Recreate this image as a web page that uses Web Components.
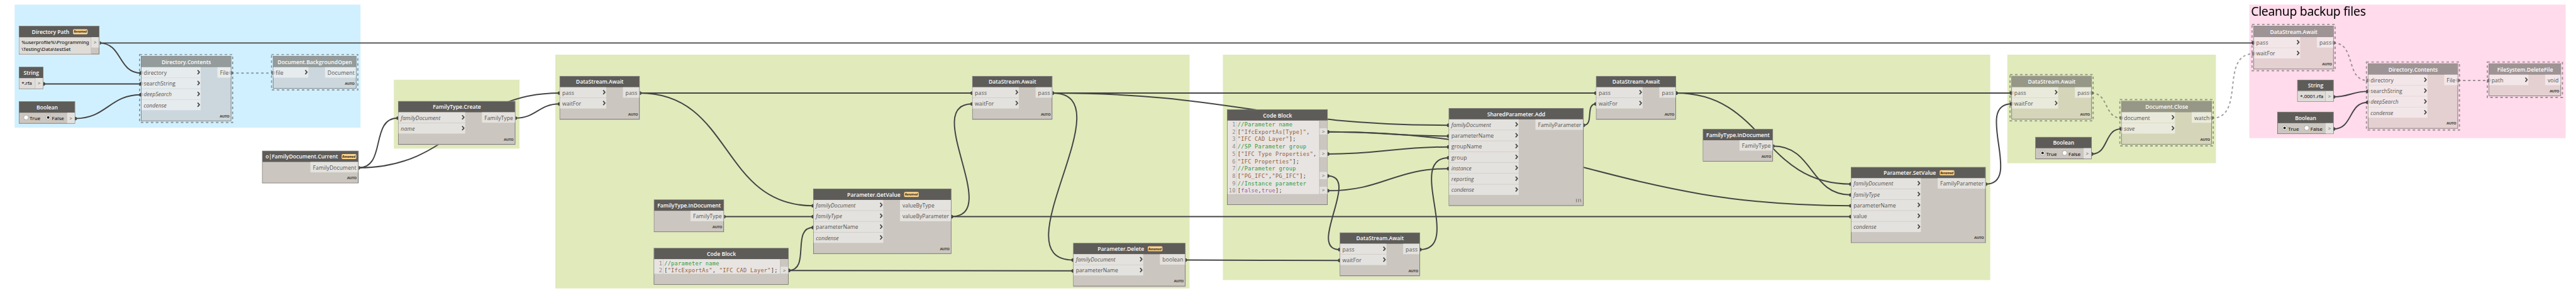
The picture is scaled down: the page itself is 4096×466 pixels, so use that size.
<!DOCTYPE html>
<html lang="en">
<head>
<meta charset="utf-8">
<title>Dynamo graph</title>
<style>
html, body { margin: 0; padding: 0; background: #fff; }
body { width: 4096px; height: 466px; overflow: hidden; font-family: "Open Sans", "Noto Sans", sans-serif; }
</style>
</head>
<body>
<graph-canvas>
  <graph-group x="35" y="11" w="829" h="295" color="#d1f0ff"></graph-group>
  <graph-group x="944" y="191" w="301" h="165" color="#e0eabb"></graph-group>
  <graph-group x="1331" y="131" w="1520" h="560" color="#e0eabb"></graph-group>
  <graph-group x="2931" y="131" w="1839" h="540" color="#e0eabb"></graph-group>
  <graph-group x="4811" y="131" w="500" h="260" color="#e0eabb"></graph-group>
  <graph-group x="5391" y="11" w="758" h="320" color="#ffdbeb">Cleanup backup files</graph-group>

  <graph-wires></graph-wires>

  <graph-node x="45" y="62" w="193" name="Directory Path" renamed kind="value">
    <text-value><fit-text>%userprofile%\Programming</fit-text><fit-text>\Testing\Data\testSet</fit-text></text-value>
    <value-port></value-port>
  </graph-node>
  <graph-node x="45" y="160" w="59" name="String" kind="value">
    <text-value><fit-text>*.rfa</fit-text></text-value><value-port></value-port>
  </graph-node>
  <graph-node x="45" y="243" w="135" name="Boolean" kind="value">
    <bool-value value="false"></bool-value><value-port></value-port>
  </graph-node>
  <graph-node x="338" y="134" w="216" name="Directory.Contents" frozen="blue">
    <in-port slot="in" linked>directory</in-port><in-port slot="in" linked>searchString</in-port>
    <in-port slot="in" optional linked>deepSearch</in-port><in-port slot="in" optional>condense</in-port>
    <out-port slot="out" w="32" linked>File</out-port>
  </graph-node>
  <graph-node x="654" y="134" w="200" name="Document.BackgroundOpen" frozen="blue">
    <in-port slot="in" linked>file</in-port>
    <out-port slot="out" w="74">Document</out-port>
  </graph-node>
  <graph-node x="628" y="361" w="231" name="o|FamilyDocument.Current" renamed>
    <out-port slot="out" w="114">FamilyDocument</out-port>
  </graph-node>
  <graph-node x="954" y="242" w="281" name="FamilyType.Create">
    <in-port slot="in" optional>familyDocument</in-port><in-port slot="in" optional>name</in-port>
    <out-port slot="out" w="79">FamilyType</out-port>
  </graph-node>
  <graph-node x="1341" y="182" w="192" name="DataStream.Await">
    <in-port slot="in">pass</in-port><in-port slot="in">waitFor</in-port>
    <out-port slot="out" w="39">pass</out-port>
  </graph-node>
  <graph-node x="1567" y="478" w="168" name="FamilyType.InDocument">
    <out-port slot="out" w="79">FamilyType</out-port>
  </graph-node>
  <graph-node x="1567" y="594" w="323" name="Code Block" kind="code">
    <code-block ports="2"><code-line><i>//parameter name</i></code-line><code-line>[<b>"IfcExportAs"</b>, <b>"IFC CAD Layer"</b>];</code-line></code-block>
  </graph-node>
  <graph-node x="1949" y="452" w="331" name="Parameter.GetValue" renamed>
    <in-port slot="in" optional>familyDocument</in-port><in-port slot="in" optional>familyType</in-port>
    <in-port slot="in">parameterName</in-port><in-port slot="in" optional>condense</in-port>
    <out-port slot="out" w="122">valueByType</out-port><out-port slot="out" w="122">valueByParameter</out-port>
  </graph-node>
  <graph-node x="2330" y="182" w="192" name="DataStream.Await">
    <in-port slot="in">pass</in-port><in-port slot="in">waitFor</in-port>
    <out-port slot="out" w="39">pass</out-port>
  </graph-node>
  <graph-node x="2572" y="582" w="269" name="Parameter.Delete" renamed>
    <in-port slot="in" optional>familyDocument</in-port><in-port slot="in">parameterName</in-port>
    <out-port slot="out" w="60">boolean</out-port>
  </graph-node>
  <graph-node x="2941" y="262" w="241" name="Code Block" kind="code">
    <code-block ports="2 5 8 10"><code-line><i>//Parameter name</i></code-line><code-line>[<b>"IfcExportAs[Type]"</b>,</code-line><code-line><b>"IFC CAD Layer"</b>];</code-line><code-line><i>//SP Parameter group</i></code-line><code-line>[<b>"IFC Type Properties"</b>,</code-line><code-line><b>"IFC Properties"</b>];</code-line><code-line><i>//Parameter group</i></code-line><code-line>[<b>"PG_IFC"</b>,<b>"PG_IFC"</b>];</code-line><code-line><i>//Instance parameter</i></code-line><code-line>[<u>false</u>,<u>true</u>];</code-line></code-block>
  </graph-node>
  <graph-node x="3211" y="557" w="192" name="DataStream.Await">
    <in-port slot="in">pass</in-port><in-port slot="in">waitFor</in-port>
    <out-port slot="out" w="39">pass</out-port>
  </graph-node>
  <graph-node x="3472" y="259" w="323" name="SharedParameter.Add" lacing>
    <in-port slot="in" optional>familyDocument</in-port><in-port slot="in">parameterName</in-port>
    <in-port slot="in">groupName</in-port><in-port slot="in">group</in-port>
    <in-port slot="in" optional>instance</in-port><in-port slot="in" optional>reporting</in-port><in-port slot="in" optional>condense</in-port>
    <out-port slot="out" w="114">FamilyParameter</out-port>
  </graph-node>
  <graph-node x="3825" y="182" w="192" name="DataStream.Await">
    <in-port slot="in">pass</in-port><in-port slot="in">waitFor</in-port>
    <out-port slot="out" w="39">pass</out-port>
  </graph-node>
  <graph-node x="4081" y="309" w="168" name="FamilyType.InDocument">
    <out-port slot="out" w="79">FamilyType</out-port>
  </graph-node>
  <graph-node x="4436" y="400" w="323" name="Parameter.SetValue" renamed>
    <in-port slot="in" optional>familyDocument</in-port><in-port slot="in" optional>familyType</in-port>
    <in-port slot="in">parameterName</in-port><in-port slot="in">value</in-port><in-port slot="in" optional>condense</in-port>
    <out-port slot="out" w="114">FamilyParameter</out-port>
  </graph-node>
  <graph-node x="4821" y="182" w="192" name="DataStream.Await" frozen="green">
    <in-port slot="in" linked>pass</in-port><in-port slot="in" linked>waitFor</in-port>
    <out-port slot="out" w="39" linked>pass</out-port>
  </graph-node>
  <graph-node x="4878" y="328" w="135" name="Boolean" kind="value">
    <bool-value value="true"></bool-value><value-port></value-port>
  </graph-node>
  <graph-node x="5084" y="242" w="217" name="Document.Close" frozen="green">
    <in-port slot="in" linked>document</in-port><in-port slot="in" optional linked>save</in-port>
    <out-port slot="out" w="47" linked>watch</out-port>
  </graph-node>
  <graph-node x="5401" y="62" w="192" name="DataStream.Await" frozen="pink">
    <in-port slot="in" linked>pass</in-port><in-port slot="in" linked>waitFor</in-port>
    <out-port slot="out" w="39" linked>pass</out-port>
  </graph-node>
  <graph-node x="5506" y="191" w="87" name="String" kind="value">
    <text-value><fit-text>*.0001.rfa</fit-text></text-value><value-port></value-port>
  </graph-node>
  <graph-node x="5458" y="268" w="135" name="Boolean" kind="value">
    <bool-value value="true"></bool-value><value-port></value-port>
  </graph-node>
  <graph-node x="5675" y="152" w="216" name="Directory.Contents" frozen="pink">
    <in-port slot="in" linked>directory</in-port><in-port slot="in" linked>searchString</in-port>
    <in-port slot="in" optional linked>deepSearch</in-port><in-port slot="in" optional>condense</in-port>
    <out-port slot="out" w="32" linked>File</out-port>
  </graph-node>
  <graph-node x="5965" y="152" w="173" name="FileSystem.DeleteFile" frozen="pink">
    <in-port slot="in" linked>path</in-port>
    <out-port slot="out" w="37">void</out-port>
  </graph-node>
</graph-canvas>

<script>
// Label widths in canvas units; letter spacing is adjusted so that each label fills its width.
const LABEL_WIDTHS = {
  'Directory Path': 90, 'Directory.Contents': 118.5, 'Document.BackgroundOpen': 178.5, 'String': 37, 'Boolean': 51,
  'FamilyType.Create': 115.5, 'o|FamilyDocument.Current': 173.5, 'DataStream.Await': 114, 'FamilyType.InDocument': 152,
  'Code Block': 69.5, 'Parameter.GetValue': 127.5, 'Parameter.Delete': 111.5, 'SharedParameter.Add': 139.5,
  'Parameter.SetValue': 125.5, 'Document.Close': 102.5, 'FileSystem.DeleteFile': 133.5,
  'directory': 55, 'searchString': 76, 'deepSearch': 67, 'condense': 54.5, 'File': 21, 'file': 19, 'Document': 65,
  'FamilyDocument': 104, 'familyDocument': 95, 'name': 34, 'FamilyType': 69, 'pass': 29, 'waitFor': 45.5,
  'familyType': 63, 'parameterName': 101.5, 'valueByType': 76.5, 'valueByParameter': 111.5, 'boolean': 50,
  'groupName': 73.5, 'group': 37.5, 'instance': 48.5, 'reporting': 54, 'FamilyParameter': 104, 'value': 32,
  'document': 62.5, 'save': 26, 'watch': 37, 'path': 28.5, 'void': 26.5,
  '%userprofile%\\Programming': 162, '\\Testing\\Data\\testSet': 118, '*.rfa': 25, '*.0001.rfa': 56,
  'True': 26, 'False': 29, 'AUTO': 23, 'Renamed': 31, 'Cleanup backup files': 275
};
const ruler = document.createElement('canvas').getContext('2d');

function define(name, html, setup) {
  const tpl = document.createElement('template');
  tpl.innerHTML = html.trim();
  customElements.define(name, class extends HTMLElement {
    connectedCallback() {
      if (this.shadowRoot) return;
      const root = this.attachShadow({ mode: 'open' });
      const view = tpl.content.cloneNode(true);
      if (setup) setup(this, view);
      root.append(view);
    }
  });
}
function place(host) {
  host.style.left = host.getAttribute('x') + 'px';
  host.style.top = host.getAttribute('y') + 'px';
  host.style.width = host.getAttribute('w') + 'px';
  if (host.hasAttribute('h')) host.style.height = host.getAttribute('h') + 'px';
}

define('graph-canvas', `
  <style>
    :host { display: block; position: relative; width: 4096px; height: 466px; overflow: hidden; }
    .stage { position: relative; width: 6174px; height: 702px; transform: scale(.66343, .66382); transform-origin: 0 0; }
  </style>
  <div class="stage"><slot></slot></div>`);

define('graph-group', `
  <style>
    :host { display: block; position: absolute; box-sizing: border-box; padding: 1.5px 0 0 4px;
      font: 29.3px/27px "Noto Sans", sans-serif; color: #000; }
  </style>
  <fit-text></fit-text>`, (host, root) => {
  place(host);
  host.style.background = host.getAttribute('color');
  root.querySelector('fit-text').textContent = host.textContent;
});

define('graph-node', `
  <style>
    :host { display: flex; flex-direction: column; position: absolute; box-sizing: border-box; border: 1px solid #5e5c59;
      --head: #5e5c59; --body: #cbc6bf; --port: #e4e2de; background: var(--body); }
    :host([frozen="blue"]) { --head: #949b9b; --body: #ccd7dd; --port: #e6ebed; }
    :host([frozen="green"]) { --head: #969786; --body: #d5d5b9; --port: #eaeadc; }
    :host([frozen="pink"]) { --head: #9f9495; --body: #e4d0d1; --port: #f2e6e8; }
    header { display: flex; align-items: center; justify-content: center; gap: 8.5px; height: 26px; box-sizing: border-box;
      background: var(--head); color: #fff; font-size: 13px; font-weight: 600; line-height: 18px; padding-left: 1px; }
    :host([renamed]) header { padding-left: 3px; }
    .badge { display: flex; align-items: center; justify-content: center; width: 35px; height: 12px; border-radius: 2.5px;
      background: #ffd68c; color: #2e2a22; font-size: 7.5px; font-weight: 700; font-style: italic; line-height: 12px; }
    .ports { display: flex; justify-content: space-between; }
    .ins { flex: 1; display: flex; flex-direction: column; gap: 1px; margin-right: 40px; }
    .outs { display: flex; flex-direction: column; gap: 1px; }
    .value { display: flex; align-items: stretch; min-height: 25px; }
    .value ::slotted(text-value), .value ::slotted(bool-value) { flex: 1; }
    footer { height: 25px; display: flex; justify-content: flex-end; align-items: center; box-sizing: border-box;
      padding: 2px 3.5px 0 0; font-size: 9px; font-weight: 800; color: #5a5855; line-height: 12px; }
    footer svg { margin-right: 1px; }
    .frost { position: absolute; left: -6px; top: -6px; width: calc(100% + 12px); height: calc(100% + 12px); overflow: visible; pointer-events: none; }
    .frost rect { x: 1.5px; y: 1.5px; width: calc(100% - 3px); height: calc(100% - 3px); fill: none; stroke: #444; stroke-opacity: .5; stroke-width: 3; stroke-dasharray: 6 6; }
  </style>
  <header><fit-text></fit-text></header>
  <div class="content"></div>`, (host, root) => {
  place(host);
  root.querySelector('header fit-text').textContent = host.getAttribute('name');
  if (host.hasAttribute('renamed')) {
    const badge = document.createElement('span');
    badge.className = 'badge';
    badge.innerHTML = '<fit-text>Renamed</fit-text>';
    root.querySelector('header').append(badge);
  }
  const kind = host.getAttribute('kind');
  const content = root.querySelector('.content');
  if (kind === 'value') content.innerHTML = '<div class="value"><slot></slot></div>';
  else if (kind === 'code') content.innerHTML = '<slot></slot><footer></footer>';
  else {
    const foot = host.hasAttribute('lacing')
      ? '<svg width="13" height="9" viewBox="0 0 13 9" fill="none" stroke="#6d6b68" stroke-width="1.5"><path d="M1 .5v8M6 .5v8M10 .5l2.5 8"/></svg>'
      : '<fit-text>AUTO</fit-text>';
    content.innerHTML = '<div class="ports"><div class="ins"><slot name="in"></slot></div><div class="outs"><slot name="out"></slot></div></div><footer>' + foot + '</footer>';
  }
  if (host.hasAttribute('frozen')) content.insertAdjacentHTML('beforeend', '<svg class="frost"><rect/></svg>');
});

define('in-port', `
  <style>
    :host { display: flex; position: relative; align-items: center; justify-content: space-between; height: 25px; box-sizing: border-box;
      padding: 0 1px 0 5.5px; background: var(--port); color: #545250; font-size: 13px; line-height: 18px; }
    :host([optional]) { font-style: italic; }
    fit-text { padding-top: 1px; }
    svg { margin-top: -1px; }
    .dot { display: none; position: absolute; left: -5px; top: 9px; width: 9px; height: 9px; border-radius: 50%; background: rgba(68,68,68,.2); }
    :host([linked]) .dot { display: block; }
  </style>
  <span class="dot"></span><fit-text></fit-text>
  <svg width="8" height="12" viewBox="0 0 8 12" fill="none" stroke="#4c4a48" stroke-width="2.7"><path d="M1.6 1L5.9 6L1.6 11"/></svg>`, (host, root) => {
  root.querySelector('fit-text').textContent = host.textContent;
});

define('out-port', `
  <style>
    :host { display: flex; position: relative; align-items: center; height: 25px; box-sizing: border-box; padding-left: 6px;
      background: var(--port); color: #545250; font-size: 13px; line-height: 18px; }
    fit-text { padding-top: 1px; }
    .dot { display: none; position: absolute; right: -5px; top: 9px; width: 9px; height: 9px; border-radius: 50%; background: rgba(68,68,68,.2); }
    :host([linked]) .dot { display: block; }
  </style>
  <span class="dot"></span><fit-text></fit-text>`, (host, root) => {
  host.style.width = host.getAttribute('w') + 'px';
  root.querySelector('fit-text').textContent = host.textContent;
});

define('value-port', `
  <style>
    :host { display: flex; align-items: center; justify-content: center; width: 18px; height: 25px; background: #e4e2de;
      color: #545250; font-size: 12px; line-height: 16px; }
  </style>
  <span>&gt;</span>`);

define('text-value', `
  <style>
    :host { display: flex; flex-direction: column; align-items: flex-start; box-sizing: border-box; padding: 4px 0 3px 5.5px;
      background: #dfdcd8; border: 1px solid #abadb3; border-width: 1px 1px 0 0; color: #000; font: 12px/16px "Noto Sans", sans-serif; }
  </style>
  <slot></slot>`);

define('bool-value', `
  <style>
    :host { display: flex; align-items: center; gap: 12px; padding-left: 9.5px; color: #000; font: 12px/16px "Noto Sans", sans-serif; }
    label { display: flex; align-items: center; gap: 2.5px; }
    svg { margin-top: -2px; }
    fit-text { padding-top: 3px; }
  </style>
  <label><svg width="13" height="13"><circle cx="6.5" cy="6.5" r="5.7" fill="#fff" stroke="#8a8886"/></svg><fit-text>True</fit-text></label>
  <label><svg width="13" height="13"><circle cx="6.5" cy="6.5" r="5.7" fill="#fff" stroke="#8a8886"/></svg><fit-text>False</fit-text></label>`, (host, root) => {
  const svg = root.querySelectorAll('svg')[host.getAttribute('value') === 'true' ? 0 : 1];
  svg.innerHTML += '<circle cx="6.5" cy="6.5" r="3.1" fill="#212121"/>';
});

define('code-line', `
  <style>
    :host { display: block; height: 17.57px; white-space: pre; color: #3b3b3b; }
    ::slotted(i) { font-style: normal; color: #2f9a3a; }
    ::slotted(b) { font-weight: normal; color: #935f3c; }
    ::slotted(u) { text-decoration: none; color: #8a60ab; }
  </style><slot></slot>`);

define('code-block', `
  <style>
    :host { display: flex; background: #e8e4e1; font: 13px/20px "DejaVu Sans Mono", monospace; letter-spacing: .42px; }
    .gutter { flex: none; width: 22px; box-sizing: border-box; padding-right: 1.5px; text-align: right; color: #8d8b89; border-right: 1px dotted #a9a7a4; }
    .gutter div { height: 17.57px; margin-left: -6px; }
    .code { flex: 1; padding-left: 2px; }
    .ports { flex: none; width: 18px; border-left: 1px solid #abadb3; background: var(--body); }
    .ports div { height: 17.57px; box-sizing: border-box; border-bottom: 1px solid transparent; background-clip: padding-box;
      text-align: center; font: 12px/17px "Open Sans", sans-serif; letter-spacing: 0; color: #545250; }
    .ports .on { background-color: #e4e2de; }
  </style>
  <div class="gutter"></div><div class="code"><slot></slot></div><div class="ports"></div>`, (host, root) => {
  const ports = host.getAttribute('ports').split(' ').map(Number);
  for (let i = 1; i <= host.children.length; i++) {
    root.querySelector('.gutter').insertAdjacentHTML('beforeend', '<div>' + i + '</div>');
    root.querySelector('.ports').insertAdjacentHTML('beforeend', ports.includes(i) ? '<div class="on">&gt;</div>' : '<div></div>');
  }
});

// Connectors: [x1, y1, x2, y2, frozen]
const WIRES = [
  [238, 103, 338, 175], [238, 103, 5401, 103], [104, 201, 338, 201], [180, 284, 338, 227], [554, 175, 654, 175, 1],
  [859, 402, 954, 283], [859, 402, 1341, 223], [1235, 283, 1341, 249], [1533, 223, 2330, 223], [1533, 223, 1949, 493],
  [1735, 519, 1949, 519], [1890, 648, 1949, 545], [1890, 648, 2572, 649], [2280, 519, 2330, 249], [2280, 519, 4436, 519],
  [2522, 223, 3825, 223], [2522, 223, 3472, 300], [2522, 223, 2572, 623], [2841, 623, 3211, 624], [3182, 316, 3472, 326],
  [3182, 316, 4436, 493], [3182, 369, 3472, 352], [3182, 421.5, 3211, 598], [3182, 457, 3472, 404], [3403, 598, 3472, 378],
  [3795, 300, 3825, 249], [4017, 223, 4821, 223], [4017, 223, 4436, 441], [4249, 350, 4436, 467], [4759, 441, 4821, 249],
  [5013, 223, 5084, 283, 1], [5013, 369, 5084, 309], [5301, 283, 5401, 129, 1], [5593, 103, 5675, 193, 1],
  [5593, 232, 5675, 219], [5593, 309, 5675, 245], [5891, 193, 5965, 193, 1]
];
define('graph-wires', `
  <style>
    :host { display: block; position: absolute; left: 0; top: 0; width: 6174px; height: 702px; }
    path { fill: none; stroke: #444; stroke-width: 3; }
    circle { fill: #444; }
    .off path { stroke-dasharray: 6 6; }
    .off { opacity: .5; }
  </style>
  <svg width="6174" height="702"></svg>`, (host, root) => {
  root.querySelector('svg').innerHTML = WIRES.map(([x1, y1, x2, y2, off]) => {
    const k = .45 * Math.hypot(x2 - x1, y2 - y1);
    return `<g class="${off ? 'off' : 'on'}"><path d="M${x1} ${y1}C${x1 + k} ${y1} ${x2 - k} ${y2} ${x2} ${y2}"/><circle cx="${x1}" cy="${y1}" r="4.3"/><circle cx="${x2}" cy="${y2}" r="4.3"/></g>`;
  }).join('');
});

// Registered last: every label measures itself with the font its finished parents give it.
define('fit-text', `
  <style>:host { display: inline-block; white-space: pre; }</style><slot></slot>`, host => {
  const text = host.textContent;
  const width = LABEL_WIDTHS[text];
  if (!width) return;
  const cs = getComputedStyle(host);
  ruler.font = cs.fontStyle + ' ' + cs.fontWeight + ' ' + cs.fontSize + ' ' + cs.fontFamily;
  host.style.letterSpacing = ((width - ruler.measureText(text).width) / text.length).toFixed(3) + 'px';
  host.style.width = width + 'px';
});
</script>
</body>
</html>
